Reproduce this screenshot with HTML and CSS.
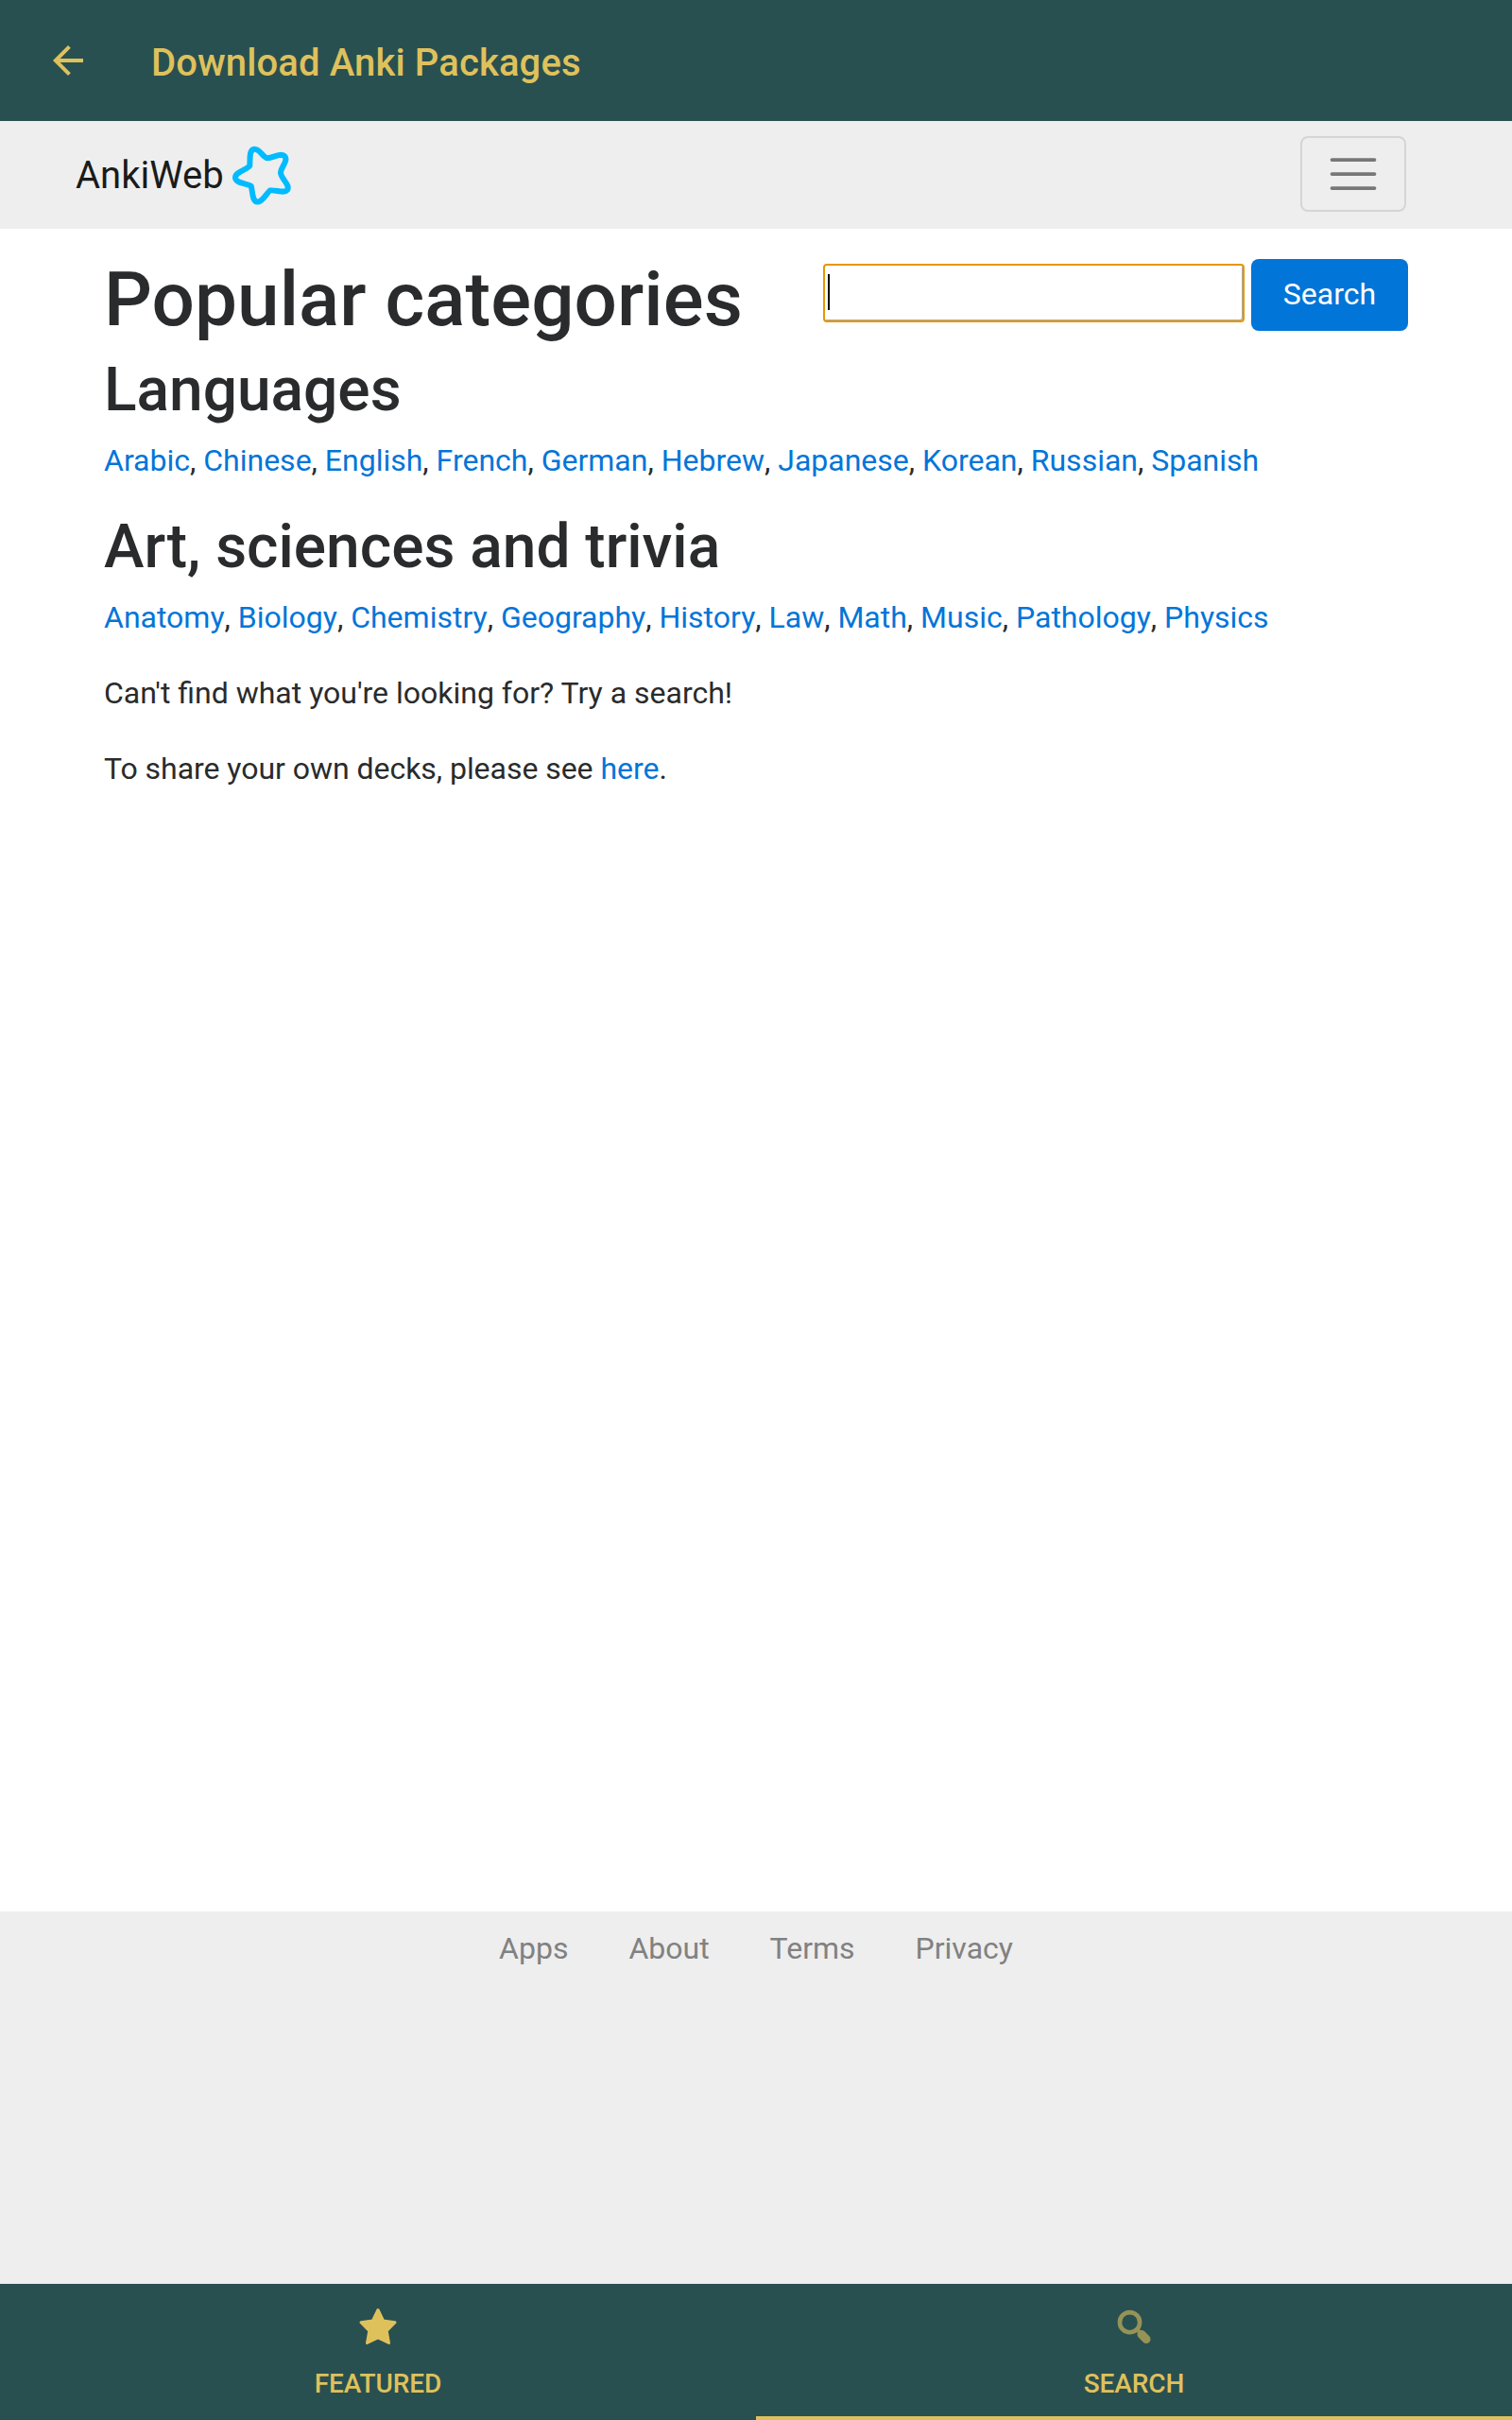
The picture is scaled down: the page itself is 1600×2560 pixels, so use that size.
FILE: index.html
```html
<!DOCTYPE html>
<html lang="en">
<head>
<meta charset="utf-8">
<title>Download Anki Packages</title>
<link rel="stylesheet" href="styles.css">
</head>
<body>
<header class="appbar">
  <svg class="back" viewBox="0 0 24 24"><path d="M20 11H7.83l5.59-5.59L12 4l-8 8 8 8 1.41-1.41L7.83 13H20z"/></svg>
  <span class="appbar-title">Download Anki Packages</span>
</header>
<nav class="navbar">
  <a class="brand">AnkiWeb
    <svg class="logo" viewBox="0 0 66 66"><path d="M19.300 23.300C19.700 15 18.500 6 24.300 5.700C30.500 5.500 33 15 38.300 15.300C44 15 52.500 9 56.600 13.600C60 18.500 51.800 25.500 52 31C52.500 37 62.500 44 59 49C55.500 53 46.500 48.500 40.700 49.500C36.500 53 33 61.600 27.300 61.600C21.500 61 22.500 50 20.700 44.700C16.500 42 4 42 4 35.700C4.200 30 15.500 28 19.300 23.300Z"/></svg>
  </a>
  <button class="toggler" aria-label="Menu"><svg viewBox="0 0 32 32"><path d="M4 8h24M4 16h24M4 24h24"/></svg></button>
</nav>
<main class="content">
  <div class="heading-row">
    <h1>Popular categories</h1>
    <div class="search">
      <div class="field"><span class="caret"></span></div>
      <button class="btn">Search</button>
    </div>
  </div>
  <h2>Languages</h2>
  <p><a>Arabic</a>, <a>Chinese</a>, <a>English</a>, <a>French</a>, <a>German</a>, <a>Hebrew</a>, <a>Japanese</a>, <a>Korean</a>, <a>Russian</a>, <a>Spanish</a></p>
  <h2>Art, sciences and trivia</h2>
  <p><a>Anatomy</a>, <a>Biology</a>, <a>Chemistry</a>, <a>Geography</a>, <a>History</a>, <a>Law</a>, <a>Math</a>, <a>Music</a>, <a>Pathology</a>, <a>Physics</a></p>
  <p>Can't find what you're looking for? Try a search!</p>
  <p class="share">To share your own decks, please see <a>here</a>.</p>
</main>
<footer class="footer"><a>Apps</a><a>About</a><a>Terms</a><a>Privacy</a></footer>
<div class="tabs">
  <div class="tab">
    <svg viewBox="0 0 48 48"><path class="star" d="M24 6.500L29.500 18L42 19.800L33.200 28.800L35.500 41.500L24 35.800L12.500 41.500L14.800 28.800L6 19.800L18.500 18Z"/></svg>
    <span>FEATURED</span>
  </div>
  <div class="tab active">
    <svg class="dim" viewBox="0 0 48 48"><circle cx="19.500" cy="19.700" r="10.600"/><path class="neck" d="M27.500 27.500L29.500 29.500"/><path class="handle" d="M32 32.500L37 37.500"/></svg>
    <span>SEARCH</span>
  </div>
</div>
</body>
</html>
```
FILE: styles.css
```css
* { box-sizing: border-box; }
body {
  margin: 0;
  height: 2560px;
  display: flex;
  flex-direction: column;
  background: #fff;
  color: #292b2c;
  font: 32px/48px Roboto, sans-serif;
}
svg { display: block; flex: none; }
.appbar {
  flex: none;
  height: 128px;
  padding-left: 48px;
  display: flex;
  align-items: center;
  gap: 64px;
  background: #295050;
  color: #dfc15c;
}
.back { width: 48px; height: 48px; fill: currentColor; }
.appbar-title { font-size: 40px; font-weight: 500; padding-top: 6px; letter-spacing: .12px; }
.navbar {
  flex: none;
  height: 114px;
  padding: 0 112px 2px 80px;
  display: flex;
  align-items: center;
  justify-content: space-between;
  background: #eee;
}
.brand { display: flex; align-items: center; gap: 8px; padding-top: 4px; font-size: 40px; color: #1a1b1b; }
.logo { width: 66px; height: 66px; margin-top: -2px; fill: none; stroke: #00bbff; stroke-width: 6; stroke-linejoin: round; }
.toggler { width: 112px; height: 80px; padding: 0 24px; border: 2px solid #d5d5d5; border-radius: 8px; background: none; }
.toggler svg { width: 60px; height: 60px; fill: none; stroke: #777; stroke-width: 2; stroke-linecap: round; }
.content { flex: 1; padding: 31px 110px 0; }
.heading-row { display: flex; justify-content: space-between; align-items: flex-start; margin-bottom: 16px; }
h1 { margin: 0; font-size: 80px; line-height: 88px; font-weight: 500; letter-spacing: .06px; }
h2 { margin: 0 0 15px; padding-top: 1px; font-size: 64px; line-height: 70px; font-weight: 500; }
p { margin: 0 0 32px; }
.content a { display: inline-block; color: #0275d8; }
.share { letter-spacing: -.04px; }
.search { display: flex; align-items: flex-start; gap: 7px; padding-top: 1px; }
.field {
  width: 446px;
  height: 62px;
  margin-top: 5px;
  display: flex;
  align-items: center;
  padding-left: 3px;
  border: 2px solid #e59700;
  border-radius: 4px;
  box-shadow: inset -1px -1px #aaa;
}
.caret { width: 2px; height: 38px; margin-bottom: 2px; background: #000; }
.btn { width: 166px; height: 76px; padding: 0 0 2px; border: 0; border-radius: 8px; background: #0275d8; color: #fff; font: 32px/40px Roboto, sans-serif; }
.footer { flex: none; height: 394px; padding-top: 15px; display: flex; justify-content: center; gap: 64px; background: #eee; color: #818181; }
.tabs { flex: none; height: 144px; display: flex; background: #295050; color: #dfc15c; }
.tab {
  flex: 1;
  display: flex;
  flex-direction: column;
  align-items: center;
  padding-top: 21px;
  border-bottom: 4px solid transparent;
  font-size: 28px;
  line-height: 36px;
  font-weight: 500;
  letter-spacing: -.1px;
}
.tab svg { width: 48px; height: 48px; margin-bottom: 19px; }
.active { border-color: #dfc15c; }
.star { fill: currentColor; stroke: currentColor; stroke-width: 3; stroke-linejoin: round; }
.dim { opacity: .6; fill: none; stroke: currentColor; stroke-width: 4.6; }
.neck { stroke-width: 4; }
.handle { stroke-width: 9; stroke-linecap: round; }
```
